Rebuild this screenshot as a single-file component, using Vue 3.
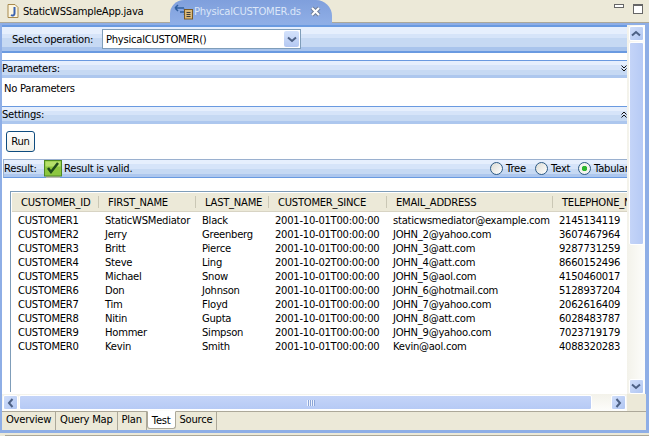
<template>
  <div class="window">
    <div class="editor-tabs">
      <div class="editor-tab">
        <svg class="file-icon" width="16" height="16" viewBox="0 0 16 16">
          <path d="M3 1.500h7l3 3v10H3z" fill="#fdf6e0" stroke="#a88a4e" />
          <path d="M9.500 4v6.500c0 2-1.800 2.500-3.500 1.500" fill="none" stroke="#3a62b0" stroke-width="2" />
        </svg>
        <span>StaticWSSampleApp.java</span>
      </div>
      <div class="editor-tab active">
        <svg class="file-icon" width="20" height="17" viewBox="0 0 20 17">
          <path d="M1 5h9M1 5l3-3M1 5l3 3M6 9h7M13 9l-3-3M13 9l-3 3" fill="none" stroke="#2f5f9e" stroke-width="1.500" />
          <rect x="10.500" y="6.500" width="8" height="9.500" fill="#d9b878" stroke="#7a5a24" />
          <path d="M12.500 9.500h4M12.500 11.500h4M12.500 13.500h4" stroke="#3d3d3d" />
        </svg>
        <span class="active-name">PhysicalCUSTOMER.ds</span>
        <svg class="close" width="11" height="11" viewBox="0 0 11 11">
          <path d="M2 2l7 7M9 2l-7 7" stroke="#6f7f99" stroke-width="4" />
          <path d="M2 2l7 7M9 2l-7 7" stroke="#fff" stroke-width="2" />
        </svg>
      </div>
      <div class="tab-spacer"></div>
      <div class="view-btn minimize"></div>
      <div class="view-btn maximize"></div>
    </div>

    <div class="frame">
      <div class="upper">
        <div class="content">
          <div class="select-band">
            <span class="select-label">Select operation:</span>
            <div class="combo">
              <span>PhysicalCUSTOMER()</span>
              <div class="combo-btn">
                <svg width="10" height="7" viewBox="0 0 10 7"><path d="M1 1.500l4 3.500 4-3.500" fill="none" stroke="#4d6185" stroke-width="2" /></svg>
              </div>
            </div>
          </div>

          <div class="section-head">
            <span>Parameters:</span>
            <svg width="6" height="7" viewBox="0 0 6 7"><path d="M.5 .5L3 3l2.500-2.500M.5 3.500L3 6l2.500-2.500" fill="none" stroke="#111" /></svg>
          </div>
          <div class="params">No Parameters</div>

          <div class="section-head">
            <span>Settings:</span>
            <svg width="6" height="7" viewBox="0 0 6 7"><path d="M.5 3.500L3 1l2.500 2.500M.5 6.500L3 4l2.500 2.500" fill="none" stroke="#111" /></svg>
          </div>
          <div class="settings">
            <button class="run">Run</button>
          </div>

          <div class="result-band">
            <span class="result-label">Result:</span>
            <svg class="valid-icon" width="18" height="18" viewBox="0 0 18 18">
              <rect y="16" x="2" width="14" height="2" fill="#b8b8b0" />
              <rect x="0.500" y="0.500" width="17" height="15.500" fill="#8cc63f" stroke="#4e8a22" />
              <rect x="1.500" y="1.500" width="15" height="5" fill="#b5e06a" />
              <path d="M4 8l3 4 7-9" fill="none" stroke="#1f4a1a" stroke-width="2.500" />
            </svg>
            <span class="valid-text">Result is valid.</span>
            <div class="radios">
              <label v-for="r in views" :key="r" class="radio">
                <span class="dot" :class="{ on: r === 'Tabular' }"></span>{{ r }}
              </label>
            </div>
          </div>

          <div class="table-wrap">
            <div class="table">
              <div class="row head">
                <div v-for="c in columns" :key="c" class="th">{{ c }}</div>
              </div>
              <div v-for="row in rows" :key="row[0]" class="row">
                <div v-for="(v, i) in row" :key="i" class="td">{{ v }}</div>
              </div>
            </div>
          </div>
        </div>

        <div class="vscroll">
          <div class="sb-btn">
            <svg width="10" height="7" viewBox="0 0 10 7"><path d="M1 5.500l4-3.500 4 3.500" fill="none" stroke="#4d6185" stroke-width="2" /></svg>
          </div>
          <div class="v-thumb"></div>
          <div class="sb-fill"></div>
          <div class="sb-btn">
            <svg width="10" height="7" viewBox="0 0 10 7"><path d="M1 1.500l4 3.500 4-3.500" fill="none" stroke="#4d6185" stroke-width="2" /></svg>
          </div>
        </div>
      </div>

      <div class="hscroll-row">
        <div class="hscroll">
          <div class="sb-btn">
            <svg width="7" height="10" viewBox="0 0 7 10"><path d="M5.500 1L2 5l3.500 4" fill="none" stroke="#4d6185" stroke-width="2" /></svg>
          </div>
          <div class="h-thumb"><span class="grip"></span></div>
          <div class="sb-fill"></div>
          <div class="sb-btn">
            <svg width="7" height="10" viewBox="0 0 7 10"><path d="M1.500 1L5 5 1.500 9" fill="none" stroke="#4d6185" stroke-width="2" /></svg>
          </div>
        </div>
      </div>

      <div class="page-tabs">
        <div v-for="t in pages" :key="t" class="page-tab" :class="{ current: t === 'Test' }">{{ t }}</div>
      </div>
    </div>
    <div class="bottom-line"></div>
  </div>
</template>

<script setup>
const views = ['Tree', 'Text', 'Tabular']
const pages = ['Overview', 'Query Map', 'Plan', 'Test', 'Source']
const columns = ['CUSTOMER_ID', 'FIRST_NAME', 'LAST_NAME', 'CUSTOMER_SINCE', 'EMAIL_ADDRESS', 'TELEPHONE_NUMBER']

const rows = [
  ['CUSTOMER1', 'StaticWSMediator', 'Black', '2001-10-01T00:00:00', 'staticwsmediator@example.com', '2145134119'],
  ['CUSTOMER2', 'Jerry', 'Greenberg', '2001-10-01T00:00:00', 'JOHN_2@yahoo.com', '3607467964'],
  ['CUSTOMER3', 'Britt', 'Pierce', '2001-10-01T00:00:00', 'JOHN_3@att.com', '9287731259'],
  ['CUSTOMER4', 'Steve', 'Ling', '2001-10-02T00:00:00', 'JOHN_4@att.com', '8660152496'],
  ['CUSTOMER5', 'Michael', 'Snow', '2001-10-01T00:00:00', 'JOHN_5@aol.com', '4150460017'],
  ['CUSTOMER6', 'Don', 'Johnson', '2001-10-01T00:00:00', 'JOHN_6@hotmail.com', '5128937204'],
  ['CUSTOMER7', 'Tim', 'Floyd', '2001-10-01T00:00:00', 'JOHN_7@yahoo.com', '2062616409'],
  ['CUSTOMER8', 'Nitin', 'Gupta', '2001-10-01T00:00:00', 'JOHN_8@att.com', '6028483787'],
  ['CUSTOMER9', 'Hommer', 'Simpson', '2001-10-01T00:00:00', 'JOHN_9@yahoo.com', '7023719179'],
  ['CUSTOMER0', 'Kevin', 'Smith', '2001-10-01T00:00:00', 'Kevin@aol.com', '4088320283']
]
</script>

<style scoped>
.window {
  width: 649px;
  height: 436px;
  display: flex;
  flex-direction: column;
  overflow: hidden;
  background: #ece9d8;
  font-family: "DejaVu Sans", sans-serif;
  font-size: 10px;
  letter-spacing: -0.25px;
  color: #000;
}

/* editor tabs */
.editor-tabs {
  height: 23px;
  flex: none;
  display: flex;
  background: #ece9d8;
  border-bottom: 1px solid #aca899;
  box-sizing: border-box;
}
.editor-tab {
  width: 170px;
  display: flex;
  align-items: center;
  gap: 2px;
  padding-left: 5px;
  box-sizing: border-box;
}
.editor-tab.active {
  width: 162px;
  padding-left: 4px;
  gap: 0;
  height: 23px;
  border-radius: 14px 16px 0 0;
  background: linear-gradient(#7f9fdc, #8faee6);
  color: #dbe6f8;
}
.active-name { flex: 1; }
.close { margin-right: 11px; }
.tab-spacer { flex: 1; }
.view-btn {
  box-sizing: border-box;
  border: 1px solid #666;
  background: #fff;
}
.minimize { width: 10px; height: 4px; margin: 4px 9px 0 0; }
.maximize { width: 10px; height: 10px; margin: 4px 6px 0 0; border-top-width: 2px; }

/* blue frame */
.frame {
  height: 410px;
  flex: none;
  box-sizing: border-box;
  padding: 2px 3px 3px 2px;
  background: #8eaee6;
  display: flex;
  flex-direction: column;
}
.upper {
  height: 369px;
  flex: none;
  display: flex;
}
.content {
  width: 625px;
  flex: none;
  background: #fff;
  display: flex;
  flex-direction: column;
  overflow: hidden;
}

.select-band {
  height: 28px;
  flex: none;
  box-sizing: border-box;
  display: flex;
  align-items: center;
  padding-left: 10px;
  border-top: 2px solid #6a9ae0;
  border-bottom: 2px solid #6a9ae0;
  background: linear-gradient(#e6effd 0 30%, #d6e4f9 30% 45%, #c6d9f3 45% 85%, #a9c4ec 85%);
}
.select-label { width: 90px; }
.combo {
  width: 199px;
  height: 20px;
  box-sizing: border-box;
  display: flex;
  align-items: center;
  justify-content: space-between;
  padding-left: 3px;
  background: #fff;
  border: 1px solid #7f9db9;
}
.combo-btn {
  width: 15px;
  height: 16px;
  margin-right: 1px;
  display: flex;
  align-items: center;
  justify-content: center;
  background: linear-gradient(#d4e2fb, #b4c8f2);
  border-radius: 2px;
}

.section-head {
  height: 18px;
  flex: none;
  box-sizing: border-box;
  margin-top: 7px;
  padding: 0 0 2px 0;
  display: flex;
  align-items: center;
  justify-content: space-between;
  border-top: 1px solid #6a9ae0;
  background: linear-gradient(#e6effd 0 25%, #d6e4f9 25% 50%, #c6d9f3 50% 80%, #adc7ee 80%);
}
.section-head svg { margin-right: 0; }
.params + .section-head { margin-top: 0; }
.params {
  height: 28px;
  flex: none;
  box-sizing: border-box;
  padding: 4px 0 0 2px;
  line-height: 13px;
}
.settings {
  height: 35px;
  flex: none;
  box-sizing: border-box;
  padding: 7px 0 0 4px;
}
.run {
  display: block;
  width: 29px;
  height: 21px;
  padding: 0;
  font: inherit;
  letter-spacing: inherit;
  background: linear-gradient(#fff, #f1f0e8);
  border: 1px solid #0f4c7f;
  border-radius: 3px;
}

.result-band {
  height: 19px;
  flex: none;
  box-sizing: border-box;
  display: flex;
  align-items: center;
  margin-left: 1px;
  border-top: 1px solid #9ab0cf;
  border-left: 1px solid #9ab0cf;
  border-bottom: 1px solid #6a9ae0;
  background: linear-gradient(#e6effd 0 25%, #d6e4f9 25% 50%, #c6d9f3 50% 80%, #adc7ee 80%);
}
.result-label { width: 40px; flex: none; }
.valid-icon { flex: none; }
.valid-text { margin-left: 2px; }
.radios {
  margin-left: auto;
  width: 137px;
  flex: none;
  overflow: hidden;
  display: grid;
  grid-template-columns: 45px 43px auto;
  white-space: nowrap;
}
.radio {
  display: flex;
  align-items: center;
}
.dot {
  width: 13px;
  height: 13px;
  flex: none;
  box-sizing: border-box;
  border: 1px solid #2d5a84;
  border-radius: 50%;
  margin-right: 3px;
  background: linear-gradient(135deg, #dcdcd4, #fff);
}
.dot.on {
  background: radial-gradient(circle, #2fb62f 0 2.500px, #f4f4ee 3px);
}

.table-wrap {
  flex: 1;
  min-height: 0;
  padding: 13px 0 2px 8px;
}
.table {
  height: 100%;
  box-sizing: border-box;
  border-top: 1px solid #7f9db9;
  border-left: 1px solid #7f9db9;
  padding: 1px 0 0 1px;
  overflow: hidden;
  white-space: nowrap;
}
.row {
  display: grid;
  grid-template-columns: 87px 97px 73px 118px 166px 120px;
  height: 14px;
  line-height: 14px;
  width: 661px;
}
.head {
  height: 19px;
  line-height: 19px;
  margin-bottom: 2px;
  background: #ece9d8;
  border-bottom: 1px solid #d8d4c4;
  box-sizing: border-box;
}
.th {
  padding-left: 9px;
  overflow: hidden;
  position: relative;
}
.th::after {
  content: "";
  position: absolute;
  right: 0;
  top: 3px;
  bottom: 3px;
  width: 1px;
  background: #cac7b5;
  box-shadow: 1px 0 0 #fff;
}
.td {
  padding-left: 6px;
  overflow: hidden;
}

/* scrollbars */
.vscroll {
  width: 18px;
  flex: none;
  display: flex;
  flex-direction: column;
  align-items: center;
  padding-top: 1px;
  box-sizing: border-box;
  background: linear-gradient(90deg, #f3f2ea, #fdfdfb);
}
.sb-btn {
  width: 15px;
  height: 15px;
  flex: none;
  display: flex;
  align-items: center;
  justify-content: center;
  box-sizing: border-box;
  border: 1px solid #fff;
  border-radius: 2px;
  background: linear-gradient(135deg, #d0defa, #b0c6f2);
}
.sb-fill { flex: 1; }
.v-thumb {
  width: 15px;
  height: 203px;
  margin-top: 1px;
  flex: none;
  box-sizing: border-box;
  border: 1px solid #fff;
  border-radius: 2px;
  background: linear-gradient(90deg, #c4d4f8, #b6caf5);
}
.hscroll-row {
  height: 17px;
  flex: none;
  background: #ece9d8;
}
.hscroll {
  width: 625px;
  height: 17px;
  display: flex;
  align-items: center;
  padding: 0 1px;
  box-sizing: border-box;
  background: linear-gradient(#f3f2ea, #fdfdfb);
}
.h-thumb {
  width: 573px;
  height: 15px;
  margin-left: 1px;
  flex: none;
  display: flex;
  justify-content: flex-end;
  align-items: center;
  box-sizing: border-box;
  border: 1px solid #fff;
  border-radius: 2px;
  background: linear-gradient(#c4d4f8, #b6caf5);
}
.grip {
  width: 8px;
  height: 6px;
  margin-right: 276px;
  background: repeating-linear-gradient(90deg, #eef3fe 0 1px, #8ca6d8 1px 2px);
}

.page-tabs {
  height: 19px;
  flex: none;
  display: flex;
  background: #ece9d8;
  border-top: 1px solid #aca899;
  box-sizing: border-box;
}
.page-tab {
  padding: 0 4px;
  line-height: 16px;
  border-right: 1px solid #aca899;
}
.page-tab.current {
  height: 18px;
  margin-top: -1px;
  line-height: 18px;
  background: #fff;
  border: 1px solid #aca899;
  border-top-color: #fff;
  border-radius: 0 0 3px 3px;
  box-sizing: border-box;
}

.bottom-line {
  height: 1px;
  margin: 2px 0 0 5px;
  background: #aca899;
}
</style>
